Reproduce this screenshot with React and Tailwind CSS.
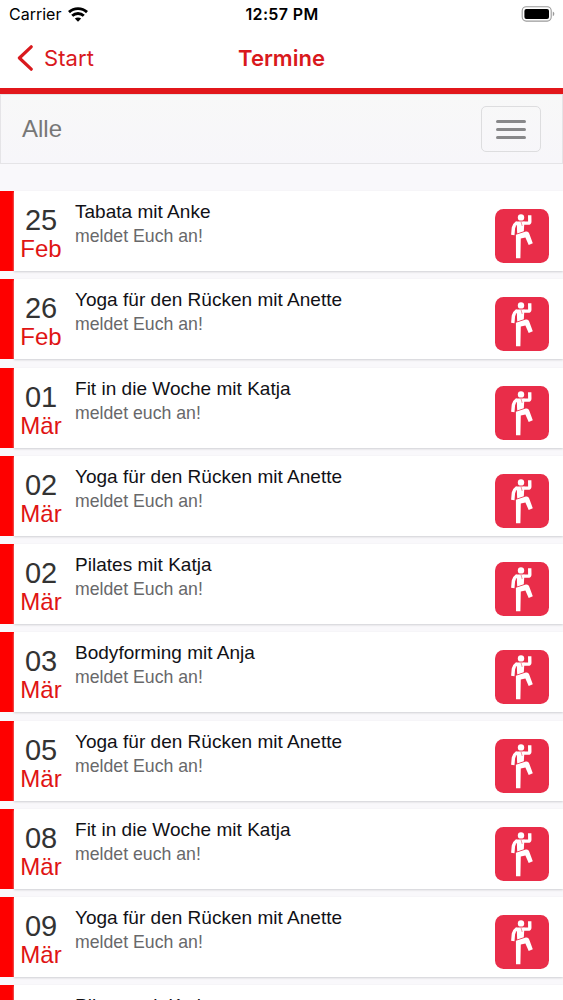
const events = [
  { day: "25", month: "Feb", title: "Tabata mit Anke", note: "meldet Euch an!" },
  { day: "26", month: "Feb", title: "Yoga für den Rücken mit Anette", note: "meldet Euch an!" },
  { day: "01", month: "Mär", title: "Fit in die Woche mit Katja", note: "meldet euch an!" },
  { day: "02", month: "Mär", title: "Yoga für den Rücken mit Anette", note: "meldet Euch an!" },
  { day: "02", month: "Mär", title: "Pilates mit Katja", note: "meldet Euch an!" },
  { day: "03", month: "Mär", title: "Bodyforming mit Anja", note: "meldet Euch an!" },
  { day: "05", month: "Mär", title: "Yoga für den Rücken mit Anette", note: "meldet Euch an!" },
  { day: "08", month: "Mär", title: "Fit in die Woche mit Katja", note: "meldet euch an!" },
  { day: "09", month: "Mär", title: "Yoga für den Rücken mit Anette", note: "meldet Euch an!" },
  { title: "Pilates mit Katja" },
];

function WifiIcon() {
  return (
    <svg width="20" height="15" viewBox="0 0 20 15" fill="none" stroke="#000" strokeWidth="2.9">
      <path d="M1 5.1 C6 .5 14 .5 19 5.1" />
      <path d="M4.2 8.7 C7.5 5.7 12.5 5.7 15.8 8.7" />
      <path d="M10 14.8 L6.8 11.6 C8.5 10 11.5 10 13.2 11.6 Z" fill="#000" stroke="none" />
    </svg>
  );
}

function BatteryIcon() {
  return (
    <svg width="34" height="16" viewBox="0 0 34 16">
      <rect x="1.2" y=".7" width="29" height="14.4" rx="4" fill="#fff" stroke="#9a9a9a" strokeWidth="1.1" />
      <rect x="3.4" y="2.9" width="24.6" height="10" rx="2" fill="#000" />
      <path d="M31.8 5.6 C33.8 6.4 33.8 9.4 31.8 10.2 Z" fill="#9a9a9a" />
    </svg>
  );
}

function FitnessIcon() {
  return (
    <svg width="54" height="54" viewBox="0 0 54 54" fill="none" className="shrink-0">
      <rect width="54" height="54" rx="8.5" fill="#e92d49" />
      <circle cx="26" cy="8.4" r="3.2" fill="#fff" />
      <path d="M21.6 12.4 L29.4 12.4 L28.8 22.2 L22.2 24.4 Z" fill="#fff" />
      <path d="M28.5 14.1 L33 14.1 C34.3 14.1 34.8 13.5 34.8 12.4 L34.7 6.2" stroke="#fff" strokeWidth="3.4" />
      <path d="M22.2 13.4 C20.2 14.8 18.9 17 18.4 19 L17.8 26" stroke="#fff" strokeWidth="3.4" />
      <path d="M21.3 16.5 L21.3 21.5" stroke="#e92d49" strokeWidth=".6" />
      <path d="M26 12.8 L27.2 17" stroke="#e92d49" strokeWidth=".5" />
      <path d="M20.9 25.8 L30 22.7 C32.4 22.1 33.5 22.8 34.2 24.6 L37.8 34.2 L33.7 36 L30.4 28.4 L25.8 29.6 L25.4 49.2 L21 49.2 Z" fill="#fff" />
    </svg>
  );
}

function StatusBar() {
  return (
    <div className="grid h-7 grid-cols-3 items-center pr-2 pl-[9px] font-[Inter,sans-serif] text-black">
      <div className="flex items-center gap-[7px] text-[16px]">
        <span>Carrier</span>
        <WifiIcon />
      </div>
      <span className="text-center text-[16px] font-semibold tracking-[0.35px] whitespace-nowrap">12:57 PM</span>
      <div className="flex justify-end">
        <BatteryIcon />
      </div>
    </div>
  );
}

function NavBar() {
  return (
    <header className="grid h-[66px] grid-cols-3 items-center border-b-[6px] border-[#e2171b] px-[17px] font-[Inter,sans-serif] text-[22px] text-[#d9191d]">
      <button className="flex items-center gap-[10px]">
        <svg width="17" height="26" viewBox="0 0 17 26" fill="none" stroke="currentColor" strokeWidth="3.2" strokeLinecap="round" strokeLinejoin="round">
          <path d="M14.2 1.8 L2.4 13 L14.2 24.2" />
        </svg>
        <span className="tracking-[0.1px]">Start</span>
      </button>
      <h1 className="text-center font-semibold">Termine</h1>
    </header>
  );
}

function FilterBar() {
  return (
    <div className="flex h-[70px] items-center justify-between border border-[#e5e4e7] bg-linear-to-b from-[#f8f8f8] to-[#f7f6fa] px-[21px]">
      <span className="text-[24px] text-[#777]">Alle</span>
      <button className="flex h-[46px] w-[60px] flex-col items-center justify-center gap-[5px] rounded-[5px] border border-[#dddddf]">
        <span className="h-[3px] w-[30px] rounded-sm bg-[#88888a]" />
        <span className="h-[3px] w-[30px] rounded-sm bg-[#88888a]" />
        <span className="h-[3px] w-[30px] rounded-sm bg-[#88888a]" />
      </button>
    </div>
  );
}

function EventRow({ day, month, title, note }) {
  return (
    <li className="mb-[8.25px] flex h-[80px] shrink-0 bg-white">
      <div className="w-[14px] shrink-0 bg-[#fe0000]" />
      <div className="flex min-w-0 flex-1 shadow-[0_1px_2px_#cfcfd3]">
        <div className="flex w-[54px] shrink-0 flex-col items-center pt-[14px]">
          <span className="text-[29px] leading-[30px] tracking-[-0.1px] text-[#333]">{day}</span>
          <span className="text-[24px] leading-[28px] text-[#e01414]">{month}</span>
        </div>
        <div className="min-w-0 flex-1 pt-[9px] pl-[7px]">
          <h2 className="text-[19px] leading-6 tracking-[0.02px] text-[#111116]">{title}</h2>
          <p className="text-[17.7px] leading-6 text-[#68686a]">{note}</p>
        </div>
        <div className="pt-[18px] pr-[14px]">
          <FitnessIcon />
        </div>
      </div>
    </li>
  );
}

export default function App() {
  return (
    <div className="flex h-[1000px] w-full flex-col overflow-hidden bg-white font-['Liberation_Sans',Arial,sans-serif]">
      <StatusBar />
      <NavBar />
      <FilterBar />
      <ul className="min-h-0 flex-1 overflow-hidden bg-[#f9f8fb] pt-[27px]">
        {events.map((event, i) => (
          <EventRow key={i} {...event} />
        ))}
      </ul>
    </div>
  );
}
